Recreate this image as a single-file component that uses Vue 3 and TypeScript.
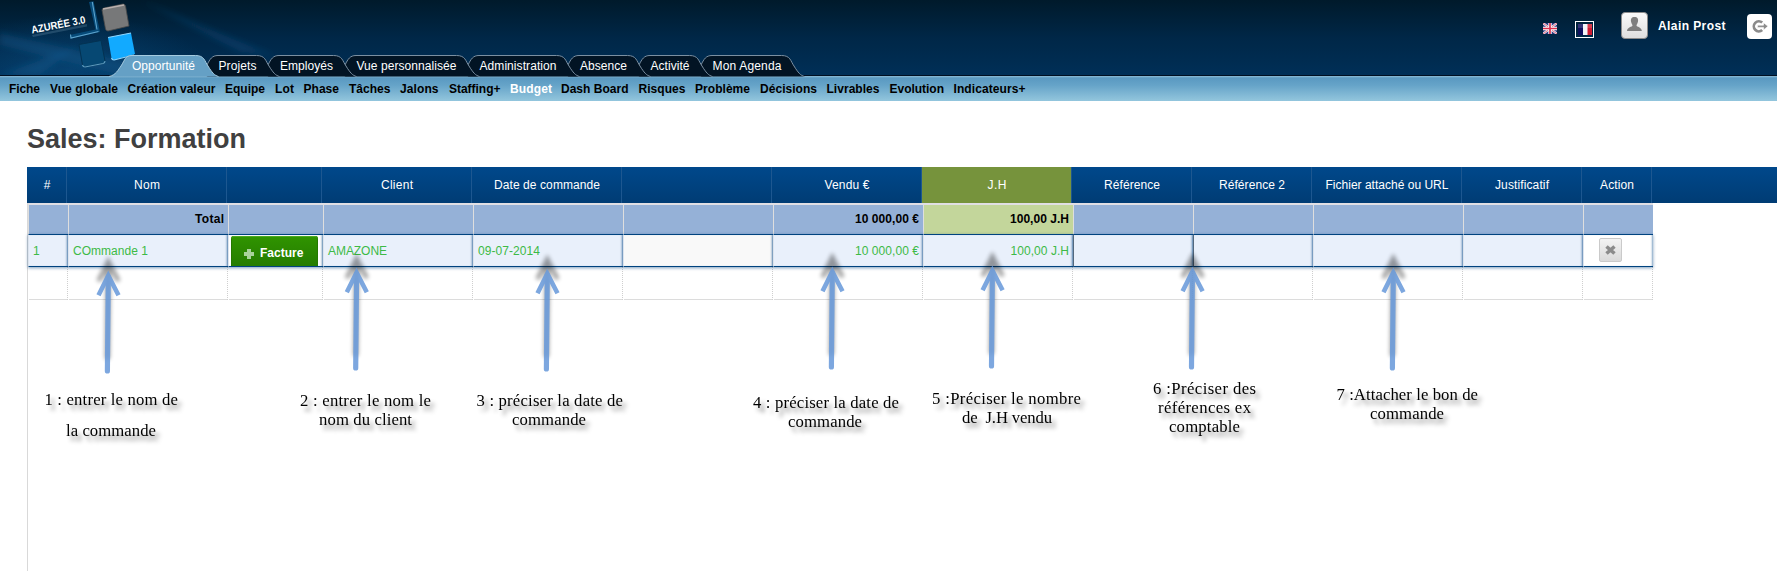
<script setup lang="ts">
type FitEl = HTMLElement

/* Spreads letters so that a label takes exactly the given width. */
const vFit = {
  mounted(el: FitEl, binding: { value?: number }) {
    const target = binding.value
    const count = (el.textContent ?? '').trim().length
    if (!target || count < 2) return
    const natural = el.getBoundingClientRect().width
    const step = (target - natural) / (count - 1)
    el.style.letterSpacing = `${step}px`
    el.style.marginRight = `${-step}px`
  },
}

interface Tab { label: string; box: number; text: number; active?: boolean }
const tabs: Tab[] = [
  { label: 'Opportunité', box: 87, text: 63, active: true },
  { label: 'Projets', box: 61, text: 38 },
  { label: 'Employés', box: 77, text: 53 },
  { label: 'Vue personnalisée', box: 123, text: 100 },
  { label: 'Administration', box: 100, text: 77 },
  { label: 'Absence', box: 71, text: 47 },
  { label: 'Activité', box: 62, text: 39 },
  { label: 'Mon Agenda', box: 92, text: 69 },
]

function tabShape(t: Tab): string {
  const w = t.box + 8.5
  const right = `H${w - 8} C${w + 1} .5 ${w + 1} 6 ${w + 4.5} 11 C${w + 8.5} 17.500 ${w + 11} 20.500 ${w + 15} 21.500`
  return t.active
    ? `M1 21.5 C8 20 10 15 13 11 C17 5 17 .5 24 .5 ${right}`
    : `M12 21.5 V10 C15 4 17 .5 23 .5 ${right}`
}

const menu: { label: string; start: number; text: number }[] = [
  { label: 'Fiche', start: 9, text: 31 },
  { label: 'Vue globale', start: 50, text: 68 },
  { label: 'Création valeur', start: 127.5, text: 88 },
  { label: 'Equipe', start: 225, text: 40 },
  { label: 'Lot', start: 275, text: 19 },
  { label: 'Phase', start: 303.5, text: 35.5 },
  { label: 'Tâches', start: 349, text: 41.5 },
  { label: 'Jalons', start: 400, text: 38.5 },
  { label: 'Staffing+', start: 449, text: 51.5 },
  { label: 'Budget', start: 510, text: 42 },
  { label: 'Dash Board', start: 561, text: 67.5 },
  { label: 'Risques', start: 638.5, text: 47 },
  { label: 'Problème', start: 695, text: 55 },
  { label: 'Décisions', start: 760, text: 57 },
  { label: 'Livrables', start: 826.5, text: 53 },
  { label: 'Evolution', start: 889.5, text: 54.5 },
  { label: 'Indicateurs+', start: 953.5, text: 72 },
]
function menuWidth(i: number): number {
  const next = menu[i + 1]
  return next ? next.start - menu[i].start : menu[i].text + 4
}

interface Column { label: string; text: number; total?: string; totalText?: number; value?: string; valueText?: number; right?: boolean; kind?: string }
const columns: Column[] = [
  { label: '#', text: 7, value: '1' },
  { label: 'Nom', text: 26, total: 'Total', totalText: 29, value: 'COmmande 1', valueText: 75 },
  { label: '', text: 0, kind: 'button' },
  { label: 'Client', text: 32, value: 'AMAZONE', valueText: 59 },
  { label: 'Date de commande', text: 106, value: '09-07-2014', valueText: 62 },
  { label: '', text: 0, kind: 'blank' },
  { label: 'Vendu €', text: 45, total: '10 000,00 €', totalText: 64, value: '10 000,00 €', valueText: 64, right: true },
  { label: 'J.H', text: 19, total: '100,00 J.H', totalText: 59, value: '100,00 J.H', valueText: 58.5, right: true, kind: 'days' },
  { label: 'Référence', text: 56, kind: 'ref' },
  { label: 'Référence 2', text: 66, kind: 'ref' },
  { label: 'Fichier attaché ou URL', text: 123 },
  { label: 'Justificatif', text: 54 },
  { label: 'Action', text: 34, kind: 'action' },
]

const arrows: [number, number][] = [
  [108.3, 271], [356.6, 268], [547.3, 269], [832.3, 267], [992.4, 266], [1192.4, 267], [1393.3, 268],
]

interface NoteLine { text: string; x: number; y: number; w: number }
const notes: NoteLine[][] = [
  [{ text: '1 : entrer le nom de', x: 44.5, y: 405, w: 133.5 }, { text: 'la commande', x: 66, y: 436, w: 90 }],
  [{ text: '2 : entrer le nom le', x: 300, y: 406, w: 131 }, { text: 'nom du client', x: 319, y: 425, w: 93 }],
  [{ text: '3 : préciser la date de', x: 476.5, y: 406, w: 146.5 }, { text: 'commande', x: 512, y: 425, w: 74 }],
  [{ text: '4 : préciser la date de', x: 753, y: 408, w: 146 }, { text: 'commande', x: 788, y: 427.3, w: 74 }],
  [{ text: '5 :Préciser le nombre', x: 932, y: 404, w: 149 }, { text: 'de\u00a0\u00a0J.H vendu', x: 962, y: 423, w: 90 }],
  [{ text: '6 :Préciser des', x: 1153, y: 394, w: 103 }, { text: 'références ex', x: 1158, y: 413, w: 93 }, { text: 'comptable', x: 1169, y: 432, w: 71 }],
  [{ text: '7 :Attacher le bon de', x: 1336.5, y: 400, w: 141.5 }, { text: 'commande', x: 1370, y: 419, w: 74 }],
]
</script>

<template>
  <div class="page">
    <header class="top">
      <svg class="glow" width="420" height="75" viewBox="0 0 420 75" aria-hidden="true">
        <defs>
          <radialGradient id="halo"><stop offset="0" stop-color="#0d568c" stop-opacity=".5" /><stop offset="1" stop-color="#0d568c" stop-opacity="0" /></radialGradient>
          <filter id="soft"><feGaussianBlur stdDeviation="3" /></filter>
        </defs>
        <ellipse cx="70" cy="70" rx="140" ry="55" fill="url(#halo)" />
        <g fill="#17629b" filter="url(#soft)">
          <path d="M0 33 L120 60 L200 75 H120 L0 45z" opacity=".3" />
          <path d="M0 75 L78 46 L40 75z" opacity=".3" />
          <path d="M140 0 L275 56 L240 52z" opacity=".28" />
        </g>
      </svg>
      <svg class="logo" width="140" height="72" viewBox="0 0 140 72" aria-label="Azurée">
        <path d="M89 2 L93.500 1.300 L100 32 L70.500 38.700 L70 35 L95.500 29.500z" fill="#074b79" />
        <path d="M92.300 2 L97 29.500 M70.500 34.500 L71 38 L98.500 31.500" fill="none" stroke="#5fa5ce" stroke-width="1.100" />
        <path d="M104 8 L123 4 Q125 4 125.500 6 L129 26 L108 31 Q106 31 105.500 29 L102 10 Q102 8.500 104 8z" fill="#777879" stroke="#4a4a4a" stroke-width=".8" />
        <path d="M103 9 L124 5" stroke="#b9b0ae" stroke-width="1.500" />
        <path d="M108 37.500 L131 33 L135 54 L114 60 Q112 60 111.500 58z" fill="#12aaff" />
        <path d="M108 37.500 L131 33 M111.500 58 Q112 60 114 60 L134 55" fill="none" stroke="#8fd7ff" stroke-width="1.200" />
        <path d="M79 44.500 L101 40.500 L105 61 Q105 63 103 63.500 L85 67 Q83 67 82.500 65z" fill="#064873" stroke="#033252" />
        <path d="M82.500 65 Q83 67 85 67 L103 63.500 Q105 63 105 61" fill="none" stroke="#5d9bbf" stroke-width="1.200" />
        <g transform="translate(32 33.500) rotate(-11)">
          <text class="brand" x="0" y="0" textLength="55" lengthAdjust="spacingAndGlyphs">AZURÉE 3.0</text>
        </g>
        <path d="M32 35 L87 24 V26.500 L33 37z" fill="#7fa8c5" opacity=".25" />
      </svg>

      <nav class="tabs">
        <a v-for="(t, i) in tabs" :key="t.label" class="tab" :class="{ on: t.active }" :style="{ width: t.box + 'px', zIndex: 20 - i }">
          <svg class="shape" :width="t.box + 30" height="22" :viewBox="`0 0 ${t.box + 30} 22`"><path :d="tabShape(t)" /></svg>
          <span v-fit="t.text" class="fit">{{ t.label }}</span>
        </a>
      </nav>

      <div class="user">
        <svg class="uk" width="14" height="11" viewBox="0 0 14 11">
          <rect width="14" height="11" fill="#2c387f" />
          <path d="M0 0L14 11M14 0L0 11" stroke="#f3eef5" stroke-width="2.200" />
          <path d="M0 0L14 11M14 0L0 11" stroke="#d9405a" stroke-width=".8" />
          <path d="M7 0V11M0 5.500H14" stroke="#fff" stroke-width="3.400" />
          <path d="M7 0V11M0 5.500H14" stroke="#dc2f4c" stroke-width="1.700" />
        </svg>
        <span class="fr">
          <svg width="14" height="11" viewBox="0 0 14 11">
            <rect width="14" height="11" fill="#f4f4f8" /><rect width="5" height="11" fill="#10105f" /><rect x="9.500" width="4.500" height="11" fill="#d01a30" />
            <rect width="14" height="4" fill="#fff" opacity=".15" />
          </svg>
        </span>
        <svg class="avatar" width="27" height="27" viewBox="0 0 27 27">
          <defs><linearGradient id="av" x1="0" y1="0" x2="0" y2="1"><stop offset="0" stop-color="#fafafa" /><stop offset="1" stop-color="#dedede" /></linearGradient></defs>
          <rect x=".5" y=".5" width="26" height="26" rx="3.500" fill="url(#av)" stroke="#8b8b8b" />
          <path d="M13.500 5 C16.500 5 17.500 7 17 9.500 C16.700 11.500 15.500 12.500 15.500 13.500 C15.500 15 20.800 15 20.800 19 H6 C6 15 11.500 15 11.500 13.500 C11.500 12.500 10.300 11.500 10 9.500 C9.600 7 10.500 5 13.500 5z" fill="#7f7f7f" />
        </svg>
        <span class="name"><span v-fit="67.5" class="fit">Alain Prost</span></span>
        <svg class="exit" width="25" height="25" viewBox="0 0 25 25">
          <rect width="25" height="25" rx="4" fill="#fff" />
          <path d="M15.200 8.600 A5 5 0 1 0 15.200 16" fill="none" stroke="#8b8b8b" stroke-width="2.700" />
          <path d="M10.500 11.200 H16.500 V8.700 L21 12.300 L16.500 15.900 V13.400 H10.500z" fill="#8b8b8b" stroke="#fff" stroke-width=".6" />
        </svg>
      </div>
    </header>

    <nav class="menu">
      <a v-for="(m, i) in menu" :key="m.label" :class="{ current: m.label === 'Budget' }" :style="{ width: menuWidth(i) + 'px' }"><span v-fit="m.text" class="fit">{{ m.label }}</span></a>
    </nav>

    <h1><span v-fit="219" class="fit">Sales: Formation</span></h1>

    <main class="grid">
      <div class="row head">
        <div v-for="(c, i) in columns" :key="i" class="cell" :class="c.kind"><span v-fit="c.text" class="fit">{{ c.label }}</span></div>
      </div>
      <div class="body">
        <div class="row total">
          <div v-for="(c, i) in columns" :key="i" class="cell" :class="c.kind"><span v-if="c.total" v-fit="c.totalText" class="fit">{{ c.total }}</span></div>
        </div>
        <div class="row order">
          <div v-for="(c, i) in columns" :key="i" class="cell" :class="[c.kind, { right: c.right }]">
            <button v-if="c.kind === 'button'" class="invoice" type="button">
              <svg width="10" height="10" viewBox="0 0 10 10"><path d="M3 0h4v3h3v4H7v3H3V7H0V3h3z" fill="#a8d29a" /></svg>
              <span v-fit="43.500" class="fit">Facture</span>
            </button>
            <button v-else-if="c.kind === 'action'" class="remove" type="button" aria-label="Supprimer">
              <svg width="11" height="10" viewBox="0 0 11 10"><path d="M1.500 1.500L9.500 8.500M9.500 1.500L1.500 8.500" stroke="#8b8b8b" stroke-width="3.600" /></svg>
            </button>
            <span v-else-if="c.value" v-fit="c.valueText" class="fit">{{ c.value }}</span>
          </div>
        </div>
        <div class="row empty"><div v-for="(c, i) in columns" :key="i" class="cell"></div></div>
      </div>
    </main>

    <svg class="notes" width="1777" height="571" viewBox="0 0 1777 571">
      <defs>
        <filter id="blur" x="-60%" y="-10%" width="220%" height="120%"><feGaussianBlur stdDeviation="1.900" /></filter>
        <g id="arrow">
          <path d="M0 6 L-.9 100" stroke-width="5.200" stroke-linecap="round" />
          <path d="M-9.800 24.200 L0 4.500 L10.200 24.200" stroke-width="4.600" stroke-miterlimit="10" />
        </g>
      </defs>
      <g v-for="(a, i) in arrows" :key="i" :transform="`translate(${a[0]} ${a[1]})`" fill="none">
        <use href="#arrow" y="-14" stroke="#000" opacity=".38" filter="url(#blur)" />
        <g opacity=".87"><use href="#arrow" stroke="#6a9bdb" /></g>
      </g>
      <g v-for="(n, i) in notes" :key="'n' + i" class="note">
        <text v-for="l in n" :key="l.text" :x="l.x" :y="l.y" :textLength="l.w">{{ l.text }}</text>
      </g>
    </svg>
  </div>
</template>

<style>
body { margin: 0; background: #fff; overflow: hidden; }
</style>

<style scoped>
.page { position: relative; width: 1777px; height: 571px; overflow: hidden; background: #fff; font: 12px/14px "Liberation Sans", Arial, sans-serif; color: #000; display: flex; flex-direction: column; }
.fit { display: inline-block; white-space: pre; }
.top { position: relative; height: 76px; box-sizing: border-box; border-bottom: 1px solid #001023; background: linear-gradient(#001a2b, #002747 50%, #002f57); display: flex; justify-content: space-between; align-items: flex-end; flex: none; }
.glow, .logo { position: absolute; left: 0; top: 0; }
.brand { font: bold 10.5px "Liberation Sans", Arial, sans-serif; fill: #fff; }
.tabs { display: flex; padding-left: 120px; height: 21px; margin-bottom: -1px; position: relative; z-index: 2; }
.tab { position: relative; display: flex; justify-content: center; height: 21px; color: #fff; line-height: 22px; }
.tab .fit { position: relative; }
.shape { position: absolute; left: -12px; top: 0; overflow: visible; }
.shape path { fill: #021424; stroke: #7b8fa1; stroke-width: 1; }
.on .shape path { fill: #65a0c5; stroke: #a5cbe0; }
.user { display: flex; height: 75px; align-items: flex-start; margin-right: 5px; }
.uk { margin: 23px 18px 0 0; }
.fr { display: block; width: 14px; height: 11px; padding: 2px 1px 2px 2px; border: 1px solid #fff; margin: 21px 27px 0 0; line-height: 0; }
.avatar { margin: 12px 10px 0 0; }
.name { width: 89px; margin-top: 19px; color: #fff; font-weight: bold; }
.exit { margin-top: 14px; }
.menu { height: 25px; flex: none; display: flex; padding-left: 9px; background: linear-gradient(#8fbcd6 0, #5a99c1 2px, #65a3c8 9px, #93c6dd 25px); font-weight: bold; line-height: 27px; }
.menu a { flex: none; height: 25px; }
.menu .current { color: #fff; }
h1 { margin: 23px 0 13px 27px; font-size: 27px; line-height: 30px; color: #404040; flex: none; }
.grid { margin-left: 27px; flex: 1; display: flex; flex-direction: column; }
.row { display: grid; grid-template-columns: 40px 160px 95px repeat(5, 150px) 120px 120px 150px 120px 70px; }
.cell { box-sizing: border-box; min-width: 0; }
.head { height: 36px; background: linear-gradient(#00488b, #003c74); color: #fff; flex: none; }
.head .cell { display: flex; align-items: center; justify-content: center; border-right: 1px solid #1d5790; padding: 0 0 1px 1px; }
.head .days { background: #76933c; }
.body { flex: 1; border-left: 1px solid #d9d9d9; }
.body .row { width: 1625px; }
.total { height: 31px; border-top: 2px solid #e0dfe4; font-weight: bold; box-sizing: border-box; }
.total .cell { background: #95b1d7; border-left: 1px solid #dedede; text-align: right; padding: 7px 4px 0 0; }
.total .days { background: #c3d69b; }
.order { height: 33px; color: #3dba46; position: relative; }
.order .cell { background: #e9f0fb; border-top: 1px solid #00437f; border-bottom: 1px solid #00437f; border-left: 1px solid #dce4ee; padding: 9px 0 0 4px; box-shadow: 0 1px 3px rgba(0, 65, 125, .5), inset -2px 0 2px -1px rgba(30, 90, 150, .55); }
.order .right { text-align: right; padding: 9px 4px 0 0; }
.order .cell.button { background: #fff; padding: 1px 3px 0 2px; }
.order .blank { background: #f9f9f9; }
.order .cell.ref { border-left-color: #53687d; }
.order .cell.action { background: #fff; padding: 3px 0 0 15px; }
.invoice { display: flex; align-items: center; gap: 6px; width: 87px; height: 30px; margin: 0; padding: 3px 0 0 13px; border: 0; border-radius: 3px 3px 0 0; background: linear-gradient(#309400, #257c00); box-shadow: inset 0 1px #4aab20, inset 1px 0 #247800, inset -1px 0 #247800; color: #fff; font: bold 12px/14px "Liberation Sans", Arial, sans-serif; }
.invoice svg { margin-top: 2px; }
.remove { display: flex; align-items: center; justify-content: center; width: 23px; height: 24px; padding: 0; border: 1px solid #cacaca; border-radius: 2px; background: linear-gradient(#f3f3f3, #dadada); }
.empty { height: 33px; }
.empty .cell { border-right: 1px dotted #cfcfcf; background: linear-gradient(#dcdcdc, #dcdcdc) 1px 100% / calc(100% - 1px) 1px no-repeat; }
.notes { position: absolute; left: 0; top: 0; pointer-events: none; }
.note { filter: drop-shadow(4px 5px 2.2px rgba(0, 0, 0, .42)); }
.note text { font: 16.7px "Liberation Serif", "Times New Roman", serif; fill: #000; white-space: pre; }
</style>
